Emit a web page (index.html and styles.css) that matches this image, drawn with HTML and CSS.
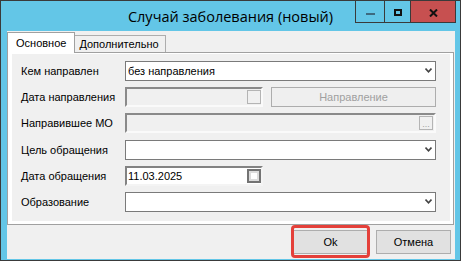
FILE: index.html
```html
<!DOCTYPE html>
<html lang="ru">
<head>
  <meta charset="UTF-8" />
  <title>Случай заболевания (новый)</title>
  <link rel="stylesheet" href="styles.css">
</head>
<body>
  <div class="window">
    <div class="titlebar">
      <div class="title">Случай заболевания (новый)</div>
      <div class="controls">
        <span class="ctl min"><i class="dash"></i></span>
        <span class="ctl max"><i class="square"></i></span>
        <span class="ctl close">
          <svg width="9" height="8" viewBox="0 0 9 8"><path d="M1 0.5 L8 7.5 M8 0.5 L1 7.5" stroke="#111" stroke-width="2"/></svg>
        </span>
      </div>
    </div>

    <div class="client">
      <div class="tabs">
        <div class="tab active">Основное</div>
        <div class="tab">Дополнительно</div>
      </div>

      <div class="page">
        <div class="form">
          <label>Кем направлен</label>
          <div class="combo"><span>без направления</span><svg class="chev" width="7" height="5" viewBox="0 0 7 5"><path d="M0.5 0.5 L3.5 3.8 L6.5 0.5" fill="none" stroke="#444" stroke-width="1.6"/></svg></div>

          <label>Дата направления</label>
          <div class="split">
            <div class="date disabled"><span></span><i class="check"></i></div>
            <button class="plain" disabled>Направление</button>
          </div>

          <label>Направившее МО</label>
          <div class="date disabled wide"><span></span><i class="dots">...</i></div>

          <label>Цель обращения</label>
          <div class="combo"><span></span><svg class="chev" width="7" height="5" viewBox="0 0 7 5"><path d="M0.5 0.5 L3.5 3.8 L6.5 0.5" fill="none" stroke="#444" stroke-width="1.6"/></svg></div>

          <label>Дата обращения</label>
          <div class="split">
            <div class="date"><span>11.03.2025</span><i class="check"></i></div>
          </div>

          <label>Образование</label>
          <div class="combo"><span></span><svg class="chev" width="7" height="5" viewBox="0 0 7 5"><path d="M0.5 0.5 L3.5 3.8 L6.5 0.5" fill="none" stroke="#444" stroke-width="1.6"/></svg></div>
        </div>
      </div>

      <div class="footer">
        <div class="ok-wrap">
          <button class="btn">Ok</button>
          <span class="highlight"></span>
        </div>
        <button class="btn">Отмена</button>
      </div>
    </div>
  </div>
</body>
</html>
```

FILE: styles.css
```css
body {
  margin: 0;
  background: #fff;
  font-family: 'Liberation Sans', Arial, sans-serif;
  font-size: 11px;
  color: #000;
}

.window {
  width: 459px;
  height: 259px;
  border: 1px solid #3a3a3a;
  background: #63c6e7;
  display: flex;
  flex-direction: column;
}

/* title bar */
.titlebar {
  height: 30px;
  display: grid;
}

.title,
.controls {
  grid-area: 1 / 1;
}

.title {
  font-family: 'Open Sans', 'Noto Sans', sans-serif;
  font-size: 14.5px;
  line-height: 31px;
  text-align: center;
  color: #000;
}

.controls {
  justify-self: end;
  align-self: start;
  display: flex;
  margin-right: 4px;
}

.ctl {
  height: 21px;
  border-left: 1px solid #3a3a3a;
  border-bottom: 1px solid #3a3a3a;
  display: flex;
  align-items: center;
  justify-content: center;
}

.min { width: 28px; }
.max { width: 25px; }

.close {
  width: 44px;
  background: #c75050;
  border-right: 1px solid #3a3a3a;
}

.dash {
  width: 9px;
  height: 2px;
  margin-top: 5px;
  background: #3d6a80;
}

.square {
  width: 8px;
  height: 7px;
  box-sizing: border-box;
  border: 2px solid #111;
  margin-top: 2px;
}

.close svg { margin-top: 2px; }

/* client area */
.client {
  flex: 1;
  margin: 0 5px 1px 6px;
  padding-top: 1px;
  background: #f0f0f0;
  display: flex;
  flex-direction: column;
}

.tabs {
  display: flex;
  align-items: flex-end;
  margin-bottom: -1px;
}

.tab {
  height: 17px;
  line-height: 17px;
  padding: 0 6px 0 4px;
  border: 1px solid #adadad;
  border-left: none;
  border-bottom: none;
  background: #f0f0f0;
}

.tab.active {
  position: relative;
  z-index: 1;
  height: 20px;
  line-height: 20px;
  padding: 0 8px 0 8px;
  border-left: 1px solid #a0a0a0;
  border-color: #a0a0a0;
  background: #fff;
}

.page {
  margin-right: 1px;
  border: 1px solid #a0a0a0;
  padding: 1px 3px 3px 4px;
  background: #fff;
}

.form {
  height: 160px;
  padding: 7px 0 0 9px;
  background: #f0f0f0;
  display: grid;
  grid-template-columns: 104px 311px;
  grid-auto-rows: 20px;
  row-gap: 6.2px;
  align-items: center;
}

.combo {
  height: 20px;
  box-sizing: border-box;
  border: 1px solid #7a7a7a;
  background: #fff;
  display: flex;
  align-items: center;
  justify-content: space-between;
  padding: 0 3px 0 2px;
}

.chev { margin-top: -1px; }

.split {
  display: flex;
  gap: 8px;
  height: 20px;
}

.date {
  width: 138px;
  height: 20px;
  box-sizing: border-box;
  border: 2px solid;
  border-color: #828282 #f4f4f4 #f4f4f4 #828282;
  background: #fff;
  display: flex;
  align-items: center;
  justify-content: space-between;
  padding: 0 0 0 1px;
}

.date.disabled {
  background: #f0f0f0;
  border-color: #8a8a8a #fafafa #fafafa #8a8a8a;
}

.date.wide { width: 311px; }

.check {
  width: 14px;
  height: 14px;
  box-sizing: border-box;
  border: 2px solid #737373;
  background: #fff;
  box-shadow: inset 0 0 0 2px #dcdcdc;
}

.disabled .check {
  border: 1px solid #b4b4b4;
  background: #f0f0f0;
  box-shadow: none;
}

.dots {
  width: 14px;
  height: 14px;
  box-sizing: border-box;
  border: 1px solid #b4b4b4;
  margin-right: 1px;
  font-style: normal;
  font-size: 9px;
  line-height: 15px;
  text-align: center;
  color: #a0a0a0;
}

.plain {
  width: 165px;
  height: 20px;
  border: 1px solid #adadad;
  background: #efefef;
  color: #a0a0a0;
  font-family: inherit;
  font-size: 11px;
  padding: 0;
}

/* buttons */
.footer {
  flex: 1;
  display: flex;
  justify-content: flex-end;
  align-items: flex-start;
  gap: 8px;
  padding: 5px 4px 0 0;
}

.ok-wrap {
  position: relative;
}

.btn {
  display: block;
  width: 75px;
  height: 24px;
  border: 1px solid #adadad;
  background: #e1e1e1;
  font-family: inherit;
  font-size: 11px;
  color: #000;
  padding: 0;
}

.highlight {
  position: absolute;
  top: -5px;
  left: -2px;
  right: -2px;
  bottom: -4px;
  border: 3px solid #e4403a;
  border-radius: 4px;
}
```
